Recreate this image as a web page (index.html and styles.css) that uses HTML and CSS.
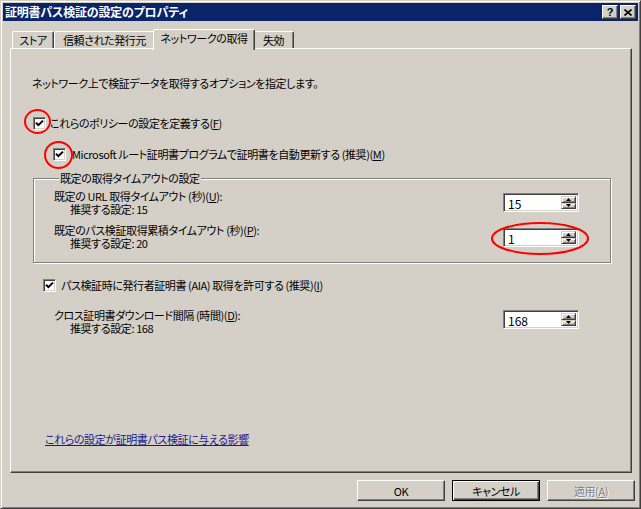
FILE: index.html
```html
<!DOCTYPE html>
<html lang="ja">
<head>
<meta charset="utf-8">
<title>証明書パス検証の設定のプロパティ</title>
<link rel="stylesheet" href="styles.css">
</head>
<body>
<div class="window">
  <div class="titlebar">
    <span class="title">証明書パス検証の設定のプロパティ</span>
    <div class="tbtns">
      <span class="tbtn help">?</span>
      <span class="tbtn close"><svg width="8" height="7" viewBox="0 0 8 7"><path d="M0.5 0.5 L7.5 6.5 M7.5 0.5 L0.5 6.5" stroke="#000" stroke-width="1.6"/></svg></span>
    </div>
  </div>
  <div class="main">
    <div class="tabs">
      <div class="tab t1">ストア</div>
      <div class="tab t2">信頼された発行元</div>
      <div class="tab t3 active">ネットワークの取得</div>
      <div class="tab t4">失効</div>
    </div>
    <div class="panel">
      <p class="desc">ネットワーク上で検証データを取得するオプションを指定します。</p>
      <div class="cb cb1"><span class="box"><svg width="9" height="9" viewBox="0 0 9 9"><path d="M1 3.8 L3.4 6.2 L8 1.6" fill="none" stroke="#000" stroke-width="2"/></svg></span><span>これらのポリシーの設定を定義する(<u>F</u>)</span></div>
      <div class="cb cb2"><span class="box"><svg width="9" height="9" viewBox="0 0 9 9"><path d="M1 3.8 L3.4 6.2 L8 1.6" fill="none" stroke="#000" stroke-width="2"/></svg></span><span>Microsoft ルート証明書プログラムで証明書を自動更新する (推奨)(<u>M</u>)</span></div>
      <div class="group">
        <div class="group-title">既定の取得タイムアウトの設定</div>
        <div class="row r1">
          <div class="lbl"><div>既定の URL 取得タイムアウト (秒)(<u>U</u>):</div><div class="rec">推奨する設定: 15</div></div>
          <div class="spin s1"><span class="val">15</span><div class="arrows"><span class="ab"><svg width="5" height="3" viewBox="0 0 5 3"><path d="M0 3 L2.5 0 L5 3Z" fill="#000"/></svg></span><span class="ab"><svg width="5" height="3" viewBox="0 0 5 3"><path d="M0 0 L2.5 3 L5 0Z" fill="#000"/></svg></span></div></div>
        </div>
        <div class="row r2">
          <div class="lbl"><div>既定のパス検証取得累積タイムアウト (秒)(<u>P</u>):</div><div class="rec">推奨する設定: 20</div></div>
          <div class="spin s2"><span class="val">1</span><div class="arrows"><span class="ab"><svg width="5" height="3" viewBox="0 0 5 3"><path d="M0 3 L2.5 0 L5 3Z" fill="#000"/></svg></span><span class="ab"><svg width="5" height="3" viewBox="0 0 5 3"><path d="M0 0 L2.5 3 L5 0Z" fill="#000"/></svg></span></div></div>
        </div>
      </div>
      <div class="cb cb3"><span class="box"><svg width="9" height="9" viewBox="0 0 9 9"><path d="M1 3.8 L3.4 6.2 L8 1.6" fill="none" stroke="#000" stroke-width="2"/></svg></span><span>パス検証時に発行者証明書 (AIA) 取得を許可する (推奨)(<u>I</u>)</span></div>
      <div class="row r3">
        <div class="lbl"><div>クロス証明書ダウンロード間隔 (時間)(<u>D</u>):</div><div class="rec">推奨する設定: 168</div></div>
        <div class="spin s3"><span class="val">168</span><div class="arrows"><span class="ab"><svg width="5" height="3" viewBox="0 0 5 3"><path d="M0 3 L2.5 0 L5 3Z" fill="#000"/></svg></span><span class="ab"><svg width="5" height="3" viewBox="0 0 5 3"><path d="M0 0 L2.5 3 L5 0Z" fill="#000"/></svg></span></div></div>
      </div>
      <a class="link" href="#">これらの設定が証明書パス検証に与える影響</a>
    </div>
    <div class="buttons">
      <span class="btn">OK</span>
      <span class="btn default">キャンセル</span>
      <span class="btn disabled">適用(<u>A</u>)</span>
    </div>
  </div>
  <svg class="annot" width="641" height="509" viewBox="0 0 641 509">
    <ellipse cx="37.5" cy="121.5" rx="12.5" ry="11.5" fill="none" stroke="#f00" stroke-width="2"/>
    <ellipse cx="58.5" cy="155" rx="13.5" ry="13" fill="none" stroke="#f00" stroke-width="2"/>
    <ellipse cx="540" cy="238.5" rx="48" ry="15.5" fill="none" stroke="#f00" stroke-width="2"/>
  </svg>
</div>
</body>
</html>
```
FILE: styles.css
```css
* { box-sizing: border-box; }
html, body { margin: 0; padding: 0; }
body {
  width: 641px;
  height: 509px;
  overflow: hidden;
  background: #d4d0c8;
  font-family: "Noto Sans CJK JP", "Liberation Sans", sans-serif;
  font-size: 11px;
  letter-spacing: -0.4px;
  color: #000;
  font-feature-settings: "palt";
}
u { text-decoration: underline; text-underline-offset: 1px; }

.window {
  position: relative;
  width: 641px;
  height: 509px;
  border: 1px solid;
  border-color: #d4d0c8 #404040 #404040 #d4d0c8;
  box-shadow: inset 1px 1px 0 #fff, inset -1px -1px 0 #808080;
  padding: 2px;
  background: #d4d0c8;
}

.titlebar {
  height: 18px;
  background: #0a246a;
  display: flex;
  align-items: center;
  justify-content: space-between;
  padding: 0 2px 0 2px;
}
.title {
  color: #fff;
  font-weight: bold;
  font-size: 12px;
  letter-spacing: -0.2px;
  line-height: 18px;
}
.tbtns { display: flex; gap: 2px; }
.tbtn {
  width: 16px;
  height: 14px;
  background: #d4d0c8;
  border: 1px solid;
  border-color: #fff #404040 #404040 #fff;
  box-shadow: inset -1px -1px 0 #808080;
  display: flex;
  align-items: center;
  justify-content: center;
  font: bold 11px "Liberation Sans", sans-serif;
  letter-spacing: 0;
  line-height: 12px;
}

.main { padding: 8px 6px 0 7px; }

.tabs {
  display: flex;
  align-items: flex-end;
  height: 19px;
  padding-left: 2px;
  position: relative;
  z-index: 1;
}
.tab {
  height: 17px;
  border: 1px solid;
  border-bottom: none;
  border-color: #fff #404040 transparent #fff;
  box-shadow: inset -1px 0 0 #808080;
  border-radius: 2px 2px 0 0;
  display: flex;
  align-items: center;
  justify-content: center;
  line-height: 15px;
  background: #d4d0c8;
  white-space: nowrap;
}
.t1 { width: 42px; }
.t2 { width: 101px; }
.t3 { width: 102px; }
.t4 { width: 41px; }
.tab.active {
  height: 21px;
  margin: 0 -2px -2px;
  padding-bottom: 3px;
  position: relative;
}

.panel {
  width: 622px;
  height: 425px;
  border: 1px solid;
  border-color: #fff #404040 #404040 #fff;
  box-shadow: inset -1px -1px 0 #808080;
  padding: 27px 0 0 21px;
}

.desc { margin: 0; line-height: 14px; height: 14px; }

.cb { display: flex; align-items: center; height: 14px; line-height: 14px; white-space: nowrap; }
.box {
  width: 13px;
  height: 13px;
  flex: none;
  background: #fff;
  border: 1px solid;
  border-color: #808080 #fff #fff #808080;
  box-shadow: inset 1px 1px 0 #404040, inset -1px -1px 0 #d4d0c8;
  display: flex;
  align-items: center;
  justify-content: center;
}
.cb1 { margin-top: 26px; margin-left: 1px; gap: 4px; }
.cb2 { margin-top: 17px; margin-left: 21px; gap: 6px; }
.cb3 { margin-top: 15px; margin-left: 11px; gap: 5px; }

.group {
  margin-top: 17px;
  margin-left: 1px;
  width: 578px;
  border: 1px solid #808080;
  box-shadow: inset 1px 1px 0 #fff, 1px 1px 0 #fff;
  padding: 0 31px 12px 20px;
}
.group-title {
  margin: -8px 0 0 5px;
  width: fit-content;
  padding: 0 1px;
  line-height: 14px;
  background: #d4d0c8;
}

.row { display: flex; justify-content: space-between; align-items: flex-start; line-height: 13px; white-space: nowrap; }
.rec { padding-left: 16px; }
.r1 { margin-top: 5px; }
.r1 .spin { margin-top: 3px; }
.r2 { margin-top: 8px; }
.r2 .spin { margin-top: 4px; }
.r3 { margin-top: 17px; margin-left: 22px; width: 525px; }
.r3 .spin { margin-top: 1px; }

.spin {
  width: 76px;
  height: 19px;
  flex: none;
  background: #fff;
  border: 1px solid;
  border-color: #808080 #fff #fff #808080;
  box-shadow: inset 1px 1px 0 #404040, inset -1px -1px 0 #d4d0c8;
  display: flex;
  padding: 2px;
}
.val { flex: 1; padding-left: 2px; line-height: 15px; font-size: 12px; letter-spacing: 0; }
.arrows { width: 15px; display: flex; flex-direction: column; }
.ab {
  flex: 1;
  background: #d4d0c8;
  border: 1px solid;
  border-color: #d4d0c8 #404040 #404040 #d4d0c8;
  box-shadow: inset 1px 1px 0 #fff, inset -1px -1px 0 #808080;
  display: flex;
  align-items: center;
  justify-content: center;
}
.ab svg { display: block; }

.link {
  display: inline-block;
  margin-top: 97px;
  margin-left: 13px;
  line-height: 14px;
  color: #1a1a8a;
  text-decoration: underline;
}

.buttons {
  display: flex;
  justify-content: flex-end;
  gap: 7px;
  margin-top: 7px;
  margin-right: -3px;
}
.btn {
  width: 88px;
  height: 21px;
  border: 1px solid;
  border-color: #fff #404040 #404040 #fff;
  box-shadow: inset -1px -1px 0 #808080;
  display: flex;
  align-items: center;
  justify-content: center;
  line-height: 14px;
}
.btn.default {
  border: 1px solid #000;
  box-shadow: inset 1px 1px 0 #fff, inset -1px -1px 0 #404040, inset -2px -2px 0 #808080;
}
.btn.disabled { color: #808080; text-shadow: 1px 1px 0 #fff; }

.annot { position: absolute; left: -1px; top: -1px; pointer-events: none; }
```
